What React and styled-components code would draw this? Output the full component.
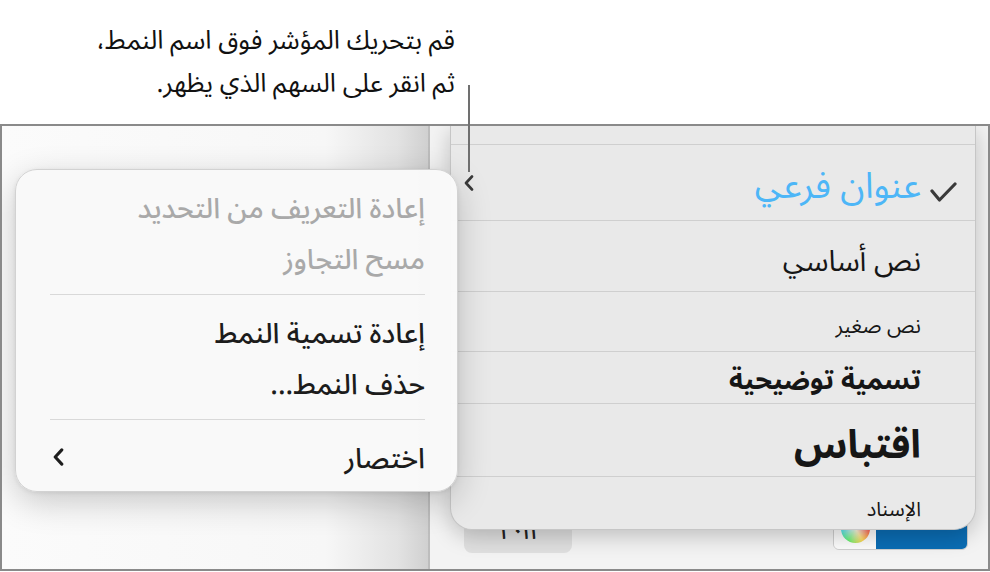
import React from 'react';
import styled, { createGlobalStyle } from 'styled-components';

const Global = createGlobalStyle`
  html, body { margin: 0; padding: 0; background: #fff; }
  body {
    width: 990px; height: 572px; overflow: hidden;
    font-family: "Noto Sans Arabic UI", "Noto Sans Arabic", "Noto Naskh Arabic", "DejaVu Sans", sans-serif;
    color: #1c1c1c;
  }
  #root { width: 990px; height: 572px; }
`;

const Page = styled.div`
  position: relative;
  width: 990px;
  height: 572px;
  display: flex;
  flex-direction: column;
`;

const Callout = styled.div`
  height: 124px;
  flex: none;
  box-sizing: border-box;
  padding: 18px 535px 0 0;
  direction: rtl;
  text-align: right;
  font-size: 26px;
  line-height: 43px;
  color: #111;
  white-space: nowrap;
`;

const Leader = styled.div`
  position: absolute;
  left: 468px;
  top: 85px;
  width: 2px;
  height: 87px;
  background: #707070;
  z-index: 5;
`;

const Frame = styled.div`
  position: relative;
  flex: none;
  height: 447px;
  box-sizing: border-box;
  border: 2px solid #8a8a8a;
  display: flex;
  overflow: hidden;
`;

const Canvas = styled.div`
  width: 426px;
  flex: none;
  background: linear-gradient(90deg, #fbfbfb 0%, #f7f7f7 76%, #e2e2e2 93%, #d0d0d0 100%);
  border-right: 2px solid #bdbdbd;
`;

const Inspector = styled.div`
  position: relative;
  flex: 1;
  background: #f3f3f3;
  display: flex;
  align-items: flex-end;
  justify-content: space-between;
  padding: 0 20px 16px 34px;
`;

const Field = styled.div`
  width: 108px;
  height: 46px;
  box-sizing: border-box;
  border-radius: 8px;
  background: #e0e0e0;
  display: flex;
  align-items: flex-end;
  justify-content: center;
  padding-bottom: 11px;
  font-size: 27px;
  line-height: 1;
  color: #222;
  direction: rtl;
`;

const ColorWell = styled.div`
  width: 135px;
  height: 44px;
  margin-bottom: 3px;
  border-radius: 6px;
  overflow: hidden;
  display: flex;
  border: 1px solid #cfcfcf;
  box-sizing: border-box;
`;

const WheelSide = styled.div`
  width: 42px;
  background: #fdfdfd;
  display: flex;
  align-items: center;
  justify-content: center;
`;

const Wheel = styled.div`
  width: 29px;
  height: 29px;
  border-radius: 50%;
  background:
    radial-gradient(circle, rgba(255,255,255,0.95) 0%, rgba(255,255,255,0) 72%),
    conic-gradient(from 90deg, #ff4d4d, #ffd84d, #5ef06a, #4de3ff, #4d6bff, #c84dff, #ff4d4d);
`;

const Swatch = styled.div`
  flex: 1;
  background: #0b6db4;
`;

const Panel = styled.div`
  position: absolute;
  left: 20px;
  right: 12px;
  top: 0;
  height: 404px;
  box-sizing: border-box;
  background: #e9e9e9;
  border: 1px solid #c6c6c6;
  border-top: none;
  border-radius: 0 0 22px 22px;
  box-shadow: 0 6px 22px rgba(0, 0, 0, 0.22);
  display: flex;
  flex-direction: column;
  z-index: 2;
`;

const TopStrip = styled.div`
  height: 18px;
  flex: none;
`;

const StyleRow = styled.div`
  height: ${p => p.$h}px;
  flex: none;
  box-sizing: border-box;
  border-top: 1px solid #cfcfcf;
  display: flex;
  direction: rtl;
  align-items: center;
  padding-top: ${p => p.$pt || 0}px;
`;

const CheckSlot = styled.div`
  width: 54px;
  flex: none;
  display: flex;
  justify-content: flex-start;
  padding-right: 18px;
  padding-top: 12px;
  box-sizing: border-box;
  align-self: center;
`;

const StyleLabel = styled.span`
  font-size: ${p => p.$size}px;
  font-weight: ${p => (p.$bold ? 700 : 400)};
  color: ${p => p.$color || '#161616'};
  white-space: nowrap;
  line-height: 1.4;
`;

const RowChevron = styled.div`
  margin-right: auto;
  margin-left: 13px;
  display: flex;
  align-self: flex-start;
  margin-top: 24px;
`;

const Menu = styled.div`
  position: absolute;
  left: 13px;
  top: 43px;
  width: 443px;
  height: 323px;
  box-sizing: border-box;
  padding: 11px 32px 11px 34px;
  background: rgba(249, 249, 249, 0.98);
  border: 1px solid #d2d2d2;
  border-radius: 22px;
  box-shadow: 0 10px 34px rgba(0, 0, 0, 0.2), 0 1px 4px rgba(0, 0, 0, 0.08);
  z-index: 3;
  direction: rtl;
  display: flex;
  flex-direction: column;
`;

const MenuItem = styled.div`
  height: 51px;
  flex: none;
  display: flex;
  align-items: center;
  font-size: 28px;
  font-weight: 500;
  white-space: nowrap;
  color: ${p => (p.$disabled ? '#a9a9a9' : '#1c1c1c')};
`;

const MenuSeparator = styled.div`
  height: 1px;
  flex: none;
  margin: 11px 0;
  background: #d9d9d9;
`;

const MenuChevron = styled.span`
  margin-right: auto;
  margin-left: 3px;
  display: flex;
`;

const Chevron = ({ w = 10, h = 16, sw = 2.6, color = '#2a2a2a' }) => (
  <svg width={w} height={h} viewBox="0 0 10 16" fill="none">
    <path d="M8 1.5 L2 8 L8 14.5" stroke={color} strokeWidth={sw} strokeLinecap="round" strokeLinejoin="round" />
  </svg>
);

const Check = () => (
  <svg width="27" height="20" viewBox="0 0 27 20" fill="none">
    <path d="M2 9 L9.5 18 L25 2" stroke="#3a3a3a" strokeWidth="3.2" strokeLinecap="round" strokeLinejoin="round" />
  </svg>
);

const styles = [
  { label: 'عنوان فرعي', h: 76, size: 36, color: '#4db6f7', checked: true, hover: true, pt: 6 },
  { label: 'نص أساسي', h: 71, size: 29, pt: 8 },
  { label: 'نص صغير', h: 60, size: 21, pt: 8 },
  { label: 'تسمية توضيحية', h: 52, size: 27, bold: true, pt: 2 },
  { label: 'اقتباس', h: 73, size: 39, bold: true, pt: 6 },
  { label: 'الإسناد', h: 54, size: 20, pt: 10 },
];

export default function App() {
  return (
    <Page>
      <Global />
      <Callout>
        <div>قم بتحريك المؤشر فوق اسم النمط،</div>
        <div>ثم انقر على السهم الذي يظهر.</div>
      </Callout>
      <Leader />
      <Frame>
        <Canvas />
        <Inspector>
          <Field>٠١١ ١</Field>
          <ColorWell>
            <WheelSide><Wheel /></WheelSide>
            <Swatch />
          </ColorWell>
          <Panel>
            <TopStrip />
            {styles.map(s => (
              <StyleRow key={s.label} $h={s.h} $pt={s.pt}>
                <CheckSlot>{s.checked && <Check />}</CheckSlot>
                <StyleLabel $size={s.size} $bold={s.bold} $color={s.color}>{s.label}</StyleLabel>
                {s.hover && (
                  <RowChevron><Chevron w={10} h={16} sw={2.6} color="#3a3a3a" /></RowChevron>
                )}
              </StyleRow>
            ))}
          </Panel>
        </Inspector>
        <Menu>
          <MenuItem $disabled>إعادة التعريف من التحديد</MenuItem>
          <MenuItem $disabled>مسح التجاوز</MenuItem>
          <MenuSeparator />
          <MenuItem>إعادة تسمية النمط</MenuItem>
          <MenuItem>حذف النمط...</MenuItem>
          <MenuSeparator />
          <MenuItem>
            اختصار
            <MenuChevron><Chevron w={11} h={18} sw={2.8} color="#1e1e1e" /></MenuChevron>
          </MenuItem>
        </Menu>
      </Frame>
    </Page>
  );
}
